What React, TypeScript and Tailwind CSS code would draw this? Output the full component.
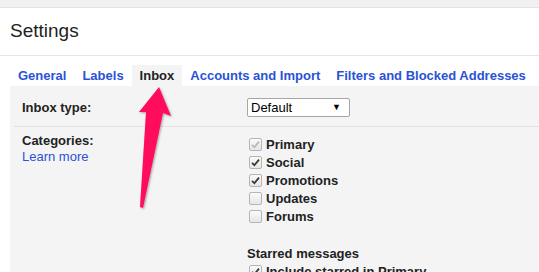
import React from 'react';

type Cat = { label: string; checked: boolean; disabled?: boolean }

const categories: Cat[] = [
  { label: "Primary", checked: true, disabled: true },
  { label: "Social", checked: true },
  { label: "Promotions", checked: true },
  { label: "Updates", checked: false },
  { label: "Forums", checked: false },
]

const tabs = ["General", "Labels", "Inbox", "Accounts and Import", "Filters and Blocked Addresses"]

const Checkbox = ({ checked, disabled }: { checked: boolean; disabled?: boolean }) => (
  <span className="w-[13px] h-[13px] rounded-[2px] border border-[#b5b5b5] bg-gradient-to-b from-[#fafafa] to-[#e6e6e6] flex items-center justify-center">
    {checked && (
      <svg width="9" height="9" viewBox="0 0 9 9">
        <path
          d="M1 4.8 L3.4 7.2 L8 1.6"
          fill="none"
          stroke={disabled ? "#b8b8b8" : "#3a3a3a"}
          strokeWidth="1.8"
        />
      </svg>
    )}
  </span>
)

export default function App() {
  return (
    <div className="relative w-[539px] h-[272px] overflow-hidden bg-white font-['Liberation_Sans',Arial,sans-serif] text-[13px] text-[#222]">
      <div className="h-[8px] bg-[#f1f1f1] border-b border-[#e3e3e3]" />

      <header className="h-[48px] border-b border-[#e5e5e5] flex items-center pl-[10px]">
        <p className="text-[19px] text-[#222]">Settings</p>
      </header>

      <nav className="flex pl-[10px] pt-[9px]">
        {tabs.map(t => (
          <div
            key={t}
            className={
              t === "Inbox"
                ? "h-[21px] px-2 flex items-center font-bold bg-[#f4f4f4] text-[#222]"
                : "h-[21px] px-2 flex items-center font-bold text-[#2a52d6]"
            }
          >
            {t}
          </div>
        ))}
      </nav>

      <div className="ml-[10px] bg-[#f4f4f4] h-full">
        <div className="ml-[4px] flex items-center pt-[12px] pb-[8px] border-b border-[#e2e2e2]">
          <div className="w-[233px] pl-[8px] font-bold">Inbox type:</div>
          <div className="w-[103px] h-[19px] bg-white border border-[#a6a6a6] rounded-[2px] flex items-center justify-between pl-[3px] pr-[8px]">
            <span className="text-[13px] text-black">Default</span>
            <span className="text-[9px] text-black">▼</span>
          </div>
        </div>

        <div className="flex">
          <div className="w-[237px] pl-[12px] pt-[6px] leading-[16px]">
            <p className="font-bold">Categories:</p>
            <p className="text-[#2a52d6]">Learn more</p>
          </div>
          <div className="pt-[9px] pl-[2px] font-bold">
            {categories.map(c => (
              <div key={c.label} className="h-[18px] flex items-center gap-[4px]">
                <Checkbox checked={c.checked} disabled={c.disabled} />
                <span>{c.label}</span>
              </div>
            ))}
            <p className="mt-[19px] h-[18px] leading-[18px] -ml-[2px]">Starred messages</p>
            <div className="h-[18px] flex items-center gap-[4px]">
              <Checkbox checked />
              <span>Include starred in Primary</span>
            </div>
          </div>
        </div>
      </div>

      <svg
        className="absolute left-0 top-0 pointer-events-none"
        width="539"
        height="272"
        viewBox="0 0 539 272"
      >
        <defs>
          <filter id="sh" x="-50%" y="-50%" width="200%" height="200%">
            <feDropShadow dx="1" dy="1" stdDeviation="1.2" floodColor="#000" floodOpacity="0.35" />
          </filter>
        </defs>
        <polygon
          points="159,87 171,116 163,113 143,208 140,207 146,112 139,112"
          fill="#ff0a5c"
          filter="url(#sh)"
        />
      </svg>
    </div>
  );
}
